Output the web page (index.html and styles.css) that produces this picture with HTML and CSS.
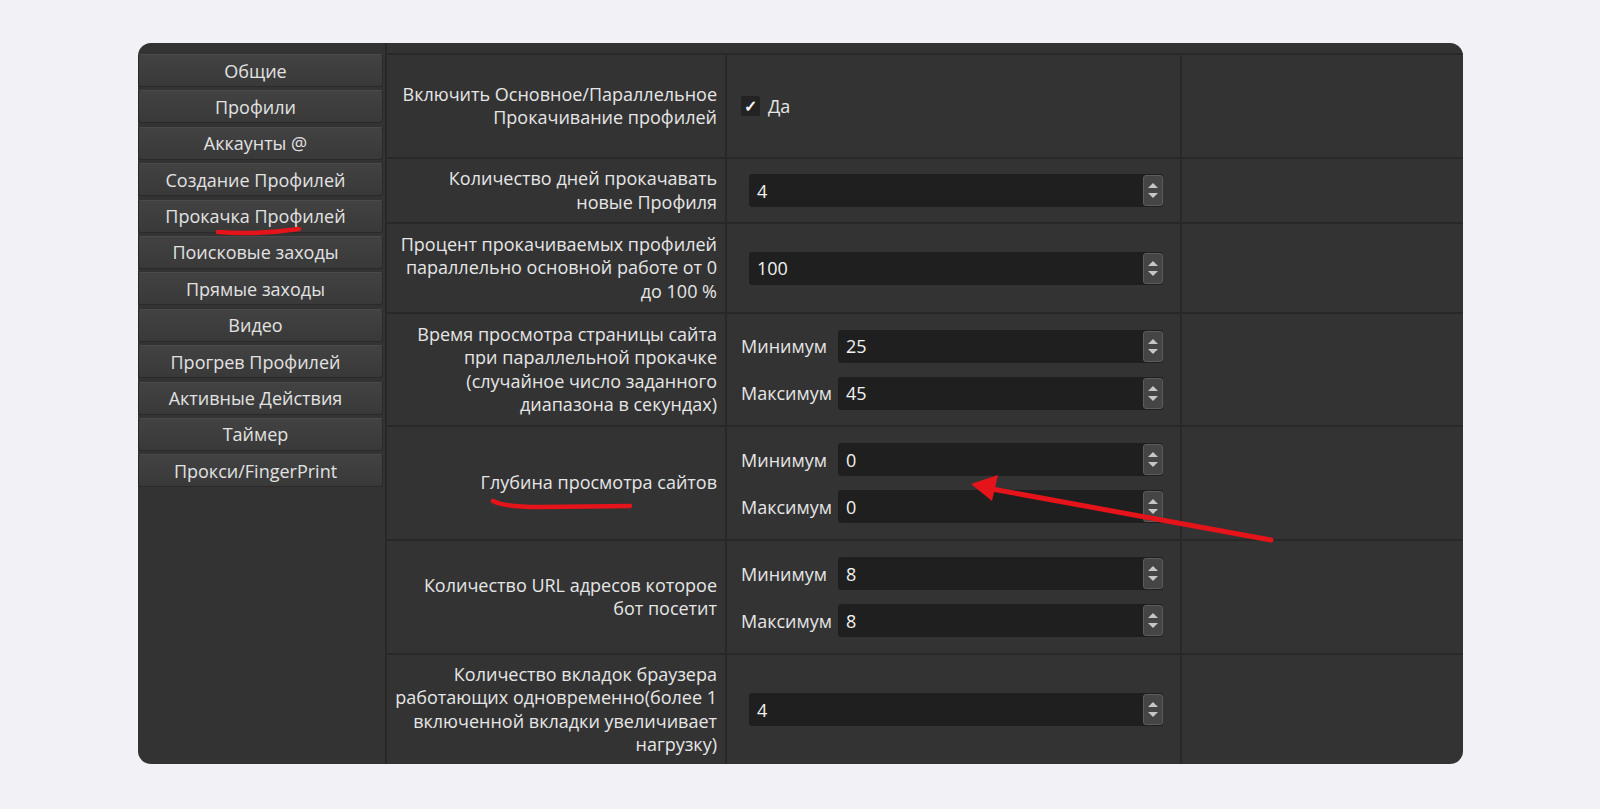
FILE: index.html
```html
<!DOCTYPE html>
<html lang="ru">
<head>
    <meta charset="UTF-8">
    <meta name="viewport" content="width=device-width, initial-scale=1.0">
    <title>Прокачка Профилей</title>
    <link rel="stylesheet" href="styles.css">
</head>
<body>
<div class="window">
    <nav class="sidebar">
        <div class="tab">Общие</div>
        <div class="tab">Профили</div>
        <div class="tab">Аккаунты @</div>
        <div class="tab">Создание Профилей</div>
        <div class="tab">Прокачка Профилей</div>
        <div class="tab">Поисковые заходы</div>
        <div class="tab">Прямые заходы</div>
        <div class="tab">Видео</div>
        <div class="tab">Прогрев Профилей</div>
        <div class="tab">Активные Действия</div>
        <div class="tab">Таймер</div>
        <div class="tab">Прокси/FingerPrint</div>
    </nav>

    <div class="settings">
        <div class="row r1">
            <div class="label">Включить Основное/Параллельное<br>Прокачивание профилей</div>
            <div class="field">
                <label class="check"><span class="box">&#10003;</span>Да</label>
            </div>
            <div class="spare"></div>
        </div>

        <div class="row r2">
            <div class="label">Количество дней прокачавать<br>новые Профиля</div>
            <div class="field">
                <div class="num"><span class="val">4</span><span class="spin"></span></div>
            </div>
            <div class="spare"></div>
        </div>

        <div class="row r3">
            <div class="label">Процент прокачиваемых профилей<br>параллельно основной работе от 0<br>до 100 %</div>
            <div class="field">
                <div class="num"><span class="val">100</span><span class="spin"></span></div>
            </div>
            <div class="spare"></div>
        </div>

        <div class="row r4">
            <div class="label">Время просмотра страницы сайта<br>при параллельной прокачке<br>(случайное число заданного<br>диапазона в секундах)</div>
            <div class="field range">
                <span class="sub">Минимум</span>
                <div class="num"><span class="val">25</span><span class="spin"></span></div>
                <span class="sub">Максимум</span>
                <div class="num"><span class="val">45</span><span class="spin"></span></div>
            </div>
            <div class="spare"></div>
        </div>

        <div class="row r5">
            <div class="label">Глубина просмотра сайтов</div>
            <div class="field range">
                <span class="sub">Минимум</span>
                <div class="num"><span class="val">0</span><span class="spin"></span></div>
                <span class="sub">Максимум</span>
                <div class="num"><span class="val">0</span><span class="spin"></span></div>
            </div>
            <div class="spare"></div>
        </div>

        <div class="row r6">
            <div class="label">Количество URL адресов которое<br>бот посетит</div>
            <div class="field range">
                <span class="sub">Минимум</span>
                <div class="num"><span class="val">8</span><span class="spin"></span></div>
                <span class="sub">Максимум</span>
                <div class="num"><span class="val">8</span><span class="spin"></span></div>
            </div>
            <div class="spare"></div>
        </div>

        <div class="row r7">
            <div class="label">Количество вкладок браузера<br>работающих одновременно(более 1<br>включенной вкладки увеличивает<br>нагрузку)</div>
            <div class="field">
                <div class="num"><span class="val">4</span><span class="spin"></span></div>
            </div>
            <div class="spare"></div>
        </div>
    </div>
</div>

<!-- red marks drawn over the screenshot -->
<svg class="marks" width="1600" height="809" viewBox="0 0 1600 809">
    <path d="M218 232 Q258 235 299 229" fill="none" stroke="#e5141a" stroke-width="4.5" stroke-linecap="round"/>
    <path d="M493 501 Q504 507 540 507 L630 506" fill="none" stroke="#e5141a" stroke-width="4.5" stroke-linecap="round"/>
    <line x1="992" y1="489" x2="1271" y2="540" stroke="#e5141a" stroke-width="5" stroke-linecap="round"/>
    <polygon points="971,484 998,475 992,501" fill="#e5141a"/>
</svg>
</body>
</html>
```

FILE: styles.css
```css
body {
    margin: 0;
    background-color: #f1f1f6;
    font-family: "Open Sans", "Noto Sans", sans-serif;
    font-size: 18px;
    color: #e6e6e6;
    position: relative;
}

.window {
    margin: 43px 0 0 138px;
    width: 1325px;
    height: 721px;
    background-color: #333333;
    border-radius: 13px;
    display: flex;
    overflow: hidden;
}

.sidebar {
    width: 245px;
    padding: 11px 2px 0 0;
    border-right: 2px solid #282828;
    display: flex;
    flex-direction: column;
    gap: 3.4px;
    flex-shrink: 0;
}

.tab {
    height: 33px;
    box-sizing: border-box;
    padding-right: 10px;
    background: linear-gradient(#424242, #393939);
    border: 1px solid #2a2a2a;
    border-top-color: #4a4a4a;
    border-radius: 3px;
    display: flex;
    align-items: center;
    justify-content: center;
    color: #e2e2e2;
    white-space: nowrap;
}

.settings {
    flex: 1;
    padding-top: 10px;
    display: flex;
    flex-direction: column;
}

.row {
    display: grid;
    grid-template-columns: 340px 455px 1fr;
    box-sizing: border-box;
    border-top: 2px solid #282828;
}

.r1 { height: 104px; }
.r2 { height: 65px; }
.r3 { height: 90px; }
.r4 { height: 113px; }
.r5 { height: 114px; }
.r6 { height: 114px; }
.r7 { flex: 1; }

.label {
    border-right: 2px solid #282828;
    display: flex;
    align-items: center;
    justify-content: flex-end;
    text-align: right;
    padding-right: 8px;
    line-height: 23.5px;
    white-space: nowrap;
}

.field {
    border-right: 2px solid #282828;
    display: flex;
    align-items: center;
    padding: 0 17px 0 22px;
}

.field.range {
    display: grid;
    grid-template-columns: 97px 1fr;
    align-content: center;
    row-gap: 14px;
    padding-left: 14px;
}

.sub {
    white-space: nowrap;
}

.num {
    flex: 1;
    height: 33px;
    background-color: #1f1f1f;
    border-radius: 3px;
    display: flex;
    align-items: center;
    justify-content: space-between;
    color: #f2f2f2;
}

.val {
    padding-left: 8px;
}

.spin {
    width: 20px;
    height: 31px;
    box-sizing: border-box;
    border: 1px solid #5c5c5c;
    border-radius: 3px;
    background-color: #454545;
    display: flex;
    flex-direction: column;
    align-items: center;
    justify-content: center;
    gap: 5px;
}

.spin:before {
    content: "";
    border-left: 5px solid transparent;
    border-right: 5px solid transparent;
    border-bottom: 5px solid #c6c6c6;
}

.spin:after {
    content: "";
    border-left: 5px solid transparent;
    border-right: 5px solid transparent;
    border-top: 5px solid #c6c6c6;
}

.check {
    display: flex;
    align-items: center;
    gap: 8px;
    margin-left: -8px;
}

.box {
    width: 19px;
    height: 20px;
    background-color: #232323;
    border-radius: 2px;
    display: flex;
    align-items: center;
    justify-content: center;
    font-size: 16px;
    font-weight: bold;
    color: #f4f4f4;
}

.marks {
    position: absolute;
    top: 0;
    left: 0;
    pointer-events: none;
}
```
